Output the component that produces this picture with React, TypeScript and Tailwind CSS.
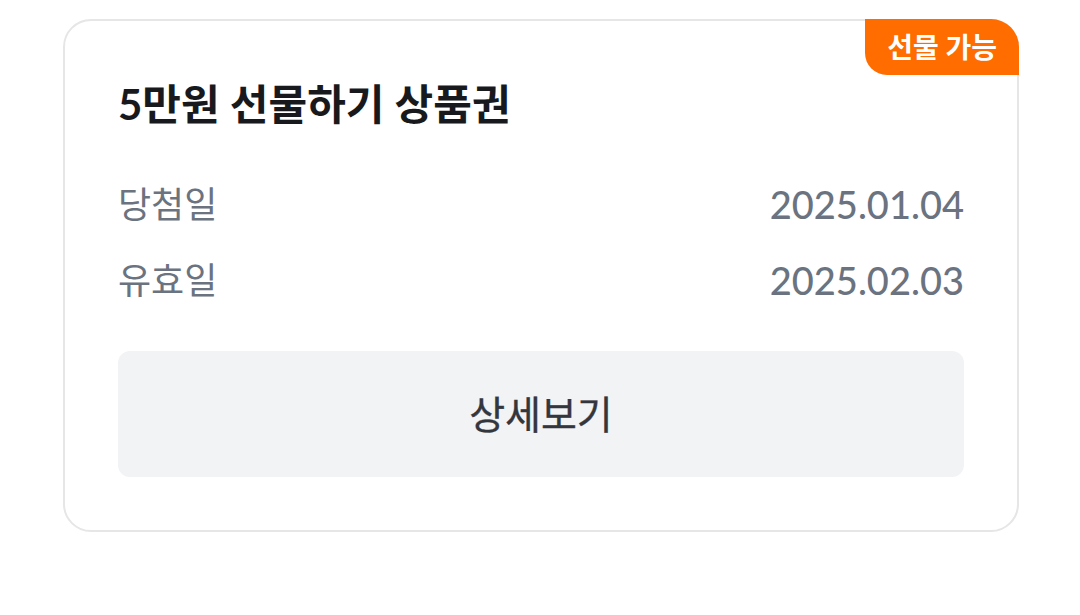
export default function App() {
  return (
    <div className="min-h-screen bg-white pt-[19px] pl-[63px] pr-[61px]" style={{ fontFamily: "Lato, 'Noto Sans CJK KR', sans-serif" }}>
      <div className="relative rounded-[28px] border-2 border-[#e6e6e6] bg-white px-[53px] pt-[58px] pb-[53px]">
        <span className="absolute -top-[2px] -right-[2px] rounded-tr-[28px] rounded-bl-[22px] bg-[#ff6c00] px-[22px] text-[28px] font-bold leading-[56px] text-white">
          선물 가능
        </span>
        <h2 className="text-[42px] font-bold leading-[50px] text-[#17191d]">5만원 선물하기 상품권</h2>
        <dl className="mt-[50px] flex flex-col gap-[26px] leading-[50px] text-[#6b7380]">
          <div className="flex items-center justify-between">
            <dt className="text-[36px]">당첨일</dt>
            <dd className="text-[38px] font-medium">2025.01.04</dd>
          </div>
          <div className="flex items-center justify-between">
            <dt className="text-[36px]">유효일</dt>
            <dd className="text-[38px] font-medium">2025.02.03</dd>
          </div>
        </dl>
        <button className="mt-[46px] flex h-[126px] w-full items-center justify-center rounded-[12px] bg-[#f2f3f5] text-[39px] font-normal text-[#33363d] [-webkit-text-stroke:0.35px_#33363d]">
          상세보기
        </button>
      </div>
    </div>
  );
}
